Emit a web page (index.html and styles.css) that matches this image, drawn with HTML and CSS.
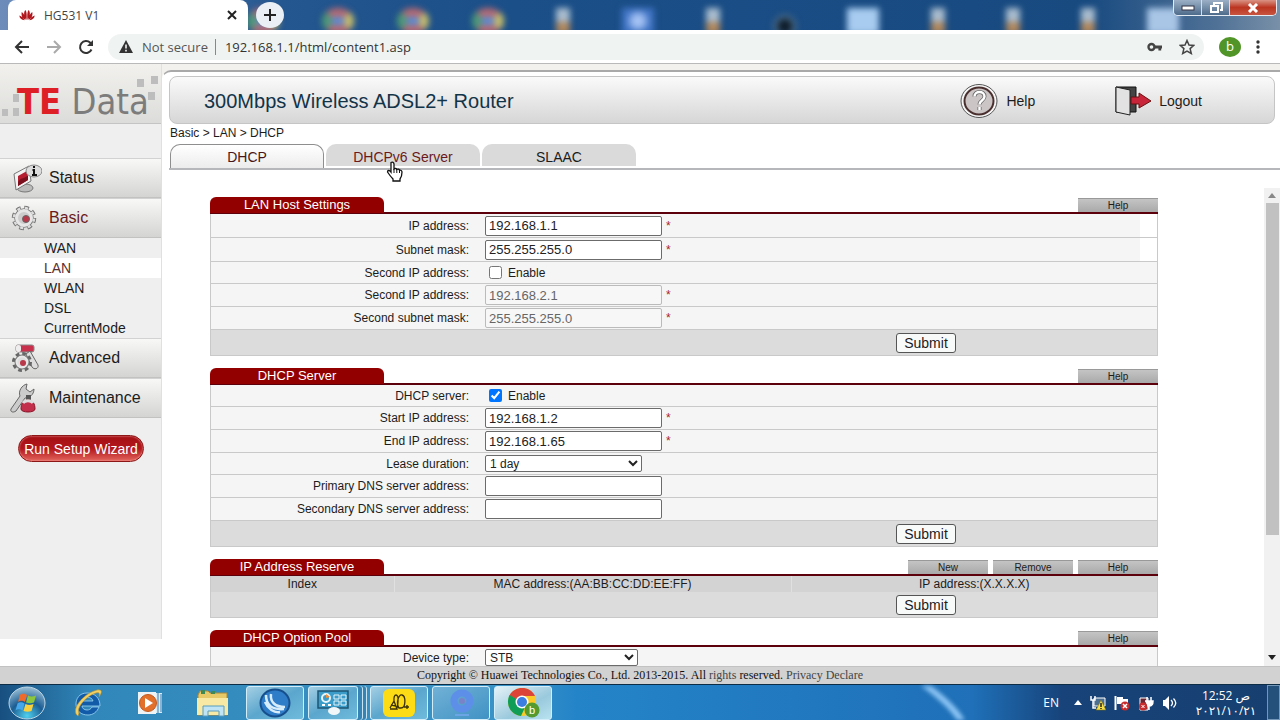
FILE: index.html
```html
<!DOCTYPE html>
<html lang="en">
<head>
    <meta charset="UTF-8">
    <meta name="viewport" content="width=device-width, initial-scale=1.0">
    <title>HG531 V1</title>
    <link rel="stylesheet" href="styles.css">
</head>
<body>
    <!-- Browser window -->
    <div class="tabstrip">
        <div class="desktop-icons">
            <i class="chrome"></i><i class="chrome"></i><i class="chrome"></i><i class="chrome"></i>
            <i class="cone"></i><i class="earth"></i><i class="cone"></i><i class="dark"></i><i class="file"></i>
            <i class="cone"></i><i class="cone"></i><i class="cone"></i><i class="sheet"></i>
        </div>
        <div class="tab">
            <svg width="16" height="12" viewBox="0 0 16 12" fill="#b0161c">
                <path d="M7.500 11C4.500 7 4.500 3 6.500 1c1.300 2 1.500 6 1 10zM8.500 11c3-4 3-8 1-10-1.300 2-1.500 6-1 10zM6.500 11C3 9 2 6 2.800 3c2.200 1.500 3.500 4.500 3.700 8zM9.500 11c3.500-2 4.500-5 3.700-8-2.200 1.500-3.500 4.500-3.700 8zM5.500 11.300C2.500 11 .6 9.300.3 6.500c2.200.6 4.200 2.500 5.200 4.800zM10.500 11.300c3-.3 4.900-2 5.200-4.800-2.200.6-4.200 2.500-5.200 4.800z"/>
            </svg>
            <span>HG531 V1</span>
            <button class="tab-close" aria-label="Close tab">
                <svg width="10" height="10" viewBox="0 0 10 10" stroke="#222" stroke-width="2"><path d="M1 1l8 8M9 1l-8 8"/></svg>
            </button>
        </div>
        <button class="new-tab" aria-label="New tab">
            <svg width="14" height="14" viewBox="0 0 14 14" stroke="#222" stroke-width="2"><path d="M7 1v12M1 7h12"/></svg>
        </button>
        <div class="window-controls">
            <button aria-label="Minimize"><svg width="14" height="8"><rect x="1" y="2" width="12" height="4" fill="#fff" stroke="#334"/></svg></button>
            <button aria-label="Restore"><svg width="14" height="12" fill="none" stroke="#fff" stroke-width="2"><path d="M5 3V1h8v7h-2"/><rect x="2" y="4" width="7" height="6"/></svg></button>
            <button class="close" aria-label="Close"><svg width="12" height="10" stroke="#fff" stroke-width="3"><path d="M2 1l8 8M10 1L2 9"/></svg></button>
        </div>
    </div>

    <div class="toolbar">
        <button aria-label="Back"><svg width="16" height="16" viewBox="0 0 16 16" fill="none" stroke="#333" stroke-width="2"><path d="M15 8H2M8 2L2 8l6 6"/></svg></button>
        <button aria-label="Forward"><svg width="16" height="16" viewBox="0 0 16 16" fill="none" stroke="#aaa" stroke-width="2"><path d="M1 8h13M8 2l6 6-6 6"/></svg></button>
        <button aria-label="Reload"><svg width="16" height="16" viewBox="0 0 16 16" fill="none" stroke="#333" stroke-width="2"><path d="M13.500 10.500A6 6 0 1 1 12.300 3.800L14 5.500"/><path d="M15 1v6H9z" fill="#333" stroke="none"/></svg></button>
        <div class="omnibox">
            <svg width="14" height="13" viewBox="0 0 14 13"><path d="M7 0l7 13H0z" fill="#333"/><path d="M7 4.500v4M7 9.800v1.600" stroke="#fff" stroke-width="1.500"/></svg>
            <span class="not-secure">Not secure</span>
            <span class="url">192.168.1.1/html/content1.asp</span>
            <svg width="16" height="10" viewBox="0 0 16 10"><circle cx="4.500" cy="5" r="3" fill="none" stroke="#444" stroke-width="2.400"/><path d="M8 5h7M12.800 5v3.500" stroke="#444" stroke-width="2.800"/></svg>
            <svg width="16" height="16" viewBox="0 0 16 16" fill="none" stroke="#444" stroke-width="1.500"><path d="M8 1.500l2 4.500 4.800.4-3.700 3.200 1.200 4.900L8 12l-4.300 2.500 1.200-4.900L1.200 6.400 6 6z"/></svg>
        </div>
        <span class="avatar">b</span>
        <button class="more" aria-label="Menu"><svg width="4" height="14" fill="#333"><circle cx="2" cy="2" r="1.700"/><circle cx="2" cy="7" r="1.700"/><circle cx="2" cy="12" r="1.700"/></svg></button>
    </div>

    <!-- Router page -->
    <div class="page">
        <aside class="sidebar">
            <div class="logo">
                <svg class="squares" viewBox="0 0 162 58">
                    <path fill="#bdbdbd" d="M137 15h7v8h-7zM151 12h7v8h-7zM148 28h7v8h-7zM13 30h6v8h-6zM2 45h6v7H2zM13 44h6v8h-6z"/>
                </svg>
                <b>TE</b> <span>Data</span>
            </div>
            <nav>
                <a class="menu" href="#">
                    <svg width="32" height="30" viewBox="0 0 32 30">
                        <ellipse cx="15" cy="25" rx="8" ry="4" fill="#bbb" stroke="#777"/>
                        <path d="M4 11L19 3l2 15L6 27z" fill="#f2f2f2" stroke="#777"/>
                        <path d="M8 13l9-5 1 9-10 6z" fill="#b51d30"/><path d="M8 19c4-6 6-2 10-7v5L8 23z" fill="#7b0f1e"/>
                        <ellipse cx="24" cy="8" rx="8" ry="6" fill="#ddd" stroke="#888"/><path d="M24 3v2M22.500 7H24v5M22 12h5" fill="none" stroke="#111" stroke-width="2"/>
                    </svg>
                    Status
                </a>
                <a class="menu open" href="#">
                    <svg width="32" height="30" viewBox="0 0 32 30">
                        <circle cx="14" cy="15" r="10" fill="none" stroke="#777" stroke-width="4.500" stroke-dasharray="4.400 3.454"/>
                        <circle cx="14" cy="15" r="7.500" fill="#d5d5d5" stroke="#777" stroke-width="4.500"/>
                        <circle cx="14" cy="15" r="10" fill="none" stroke="#ddd" stroke-width="2.500" stroke-dasharray="3 4.854" stroke-dashoffset="-.7"/>
                        <circle cx="14" cy="15" r="7.500" fill="#ccc" stroke="#e6e6e6" stroke-width="3"/>
                        <circle cx="16" cy="16" r="3.500" fill="#b9384a" stroke="#666"/>
                    </svg>
                    Basic
                </a>
                <ul>
                    <li><a href="#">WAN</a></li>
                    <li class="active"><a href="#">LAN</a></li>
                    <li><a href="#">WLAN</a></li>
                    <li><a href="#">DSL</a></li>
                    <li><a href="#">CurrentMode</a></li>
                </ul>
                <a class="menu" href="#">
                    <svg width="32" height="30" viewBox="0 0 32 30">
                        <rect x="6" y="2" width="18" height="7" rx="2" fill="#c9304c" stroke="#888"/><rect x="6" y="2" width="5" height="7" rx="2" fill="#eee"/>
                        <path d="M20 8l8 14c1 4-4 5-6 2L16 11z" fill="#ddd" stroke="#666"/>
                        <circle cx="12" cy="19" r="8" fill="none" stroke="#666" stroke-width="4" stroke-dasharray="3.500 2.783"/>
                        <circle cx="12" cy="19" r="6.500" fill="#ddd" stroke="#777" stroke-width="2"/><circle cx="12" cy="19" r="5.500" fill="none" stroke="#e8e8e8" stroke-width="2"/><circle cx="13" cy="20" r="3" fill="#b9384a"/>
                    </svg>
                    Advanced
                </a>
                <a class="menu" href="#">
                    <svg width="32" height="30" viewBox="0 0 32 30">
                        <path d="M1 26l9-13c-2-5 2-11 7-12l-1 5 4 3 4-3c0 6-5 9-9 9L6 28c-3 2-6 1-5-2z" fill="#ccc" stroke="#666"/>
                        <path d="M16 12h5v6h-5z" fill="#555"/><path d="M11 26c0-5 2-9 7-9s7 4 7 9c0 4-14 4-14 0z" fill="#c22f4a" stroke="#8a1528"/><path d="M13 20c2-3 8-3 10 0" stroke="#ddd" stroke-width="3" fill="none"/>
                    </svg>
                    Maintenance
                </a>
            </nav>
            <button class="wizard">Run Setup Wizard</button>
        </aside>

        <main>
            <div class="panel">
                <header>
                    <h1>300Mbps Wireless ADSL2+ Router</h1>
                    <a class="help" href="#">
                        <svg width="38" height="36" viewBox="0 0 38 36">
                            <ellipse cx="19" cy="18" rx="18" ry="16.500" fill="#f5f5f5" stroke="#555"/>
                            <ellipse cx="19" cy="18" rx="14.500" ry="13.500" fill="#ccc5c5" stroke="#4a2f2f" stroke-width="2"/>
                            <path d="M14.500 13.500c0-6 10-6 10 0 0 4-5 4-5 8M19.500 24v3" fill="none" stroke="#666" stroke-width="4"/>
                            <path d="M14.500 13.500c0-6 10-6 10 0 0 4-5 4-5 8M19.500 24v3" fill="none" stroke="#fff" stroke-width="2.500"/>
                        </svg>
                        Help
                    </a>
                    <a class="logout" href="#">
                        <svg width="36" height="30" viewBox="0 0 36 30">
                            <path d="M1 1h20v25H1z" fill="#444" stroke="#111"/>
                            <path d="M1 1l14 3v25L1 26z" fill="#e2e2e2" stroke="#222"/>
                            <path d="M16 11h8V7l12 8-12 7v-4h-8z" fill="#c8243a" stroke="#611"/>
                        </svg>
                        Logout
                    </a>
                </header>
                <div class="breadcrumb">Basic &gt; LAN &gt; DHCP</div>
                <div class="tabs">
                    <a class="current" href="#">DHCP</a>
                    <a class="hover" href="#">DHCPv6 Server
                        <svg class="cursor" width="18" height="21" viewBox="0 0 18 21"><path d="M5 1.500c1.500-1 3 0 3 1.500v5c1-1 2.500-.5 2.800.5 1-.8 2.400-.2 2.700.8 1.300-.5 2.500.3 2.500 1.700 0 3-.5 5-2 7v2H7v-2c-2-2-3.500-4-5.500-7 0-2 2-2 3.500 0z" fill="#fff" stroke="#111" stroke-width="1.300"/><path d="M8 8v4M10.800 8.500V12M13.500 9.500V12" stroke="#111"/></svg>
                    </a>
                    <a href="#">SLAAC</a>
                </div>
                <div class="scroll-area">
                    <div class="content">
                        <section>
                            <div class="section-head"><h2>LAN Host Settings</h2><button>Help</button></div>
                            <form>
                                <div class="row short"><label for="ip">IP address:</label><div><input type="text" id="ip" value="192.168.1.1"><em>*</em></div></div>
                                <div class="row short"><label for="mask">Subnet mask:</label><div><input type="text" id="mask" value="255.255.255.0"><em>*</em></div></div>
                                <div class="row check"><span>Second IP address:</span><div><input type="checkbox" id="second"><label for="second">Enable</label></div></div>
                                <div class="row"><label for="ip2">Second IP address:</label><div><input type="text" id="ip2" value="192.168.2.1" disabled><em>*</em></div></div>
                                <div class="row"><label for="mask2">Second subnet mask:</label><div><input type="text" id="mask2" value="255.255.255.0" disabled><em>*</em></div></div>
                                <div class="submit"><button type="button">Submit</button></div>
                            </form>
                        </section>

                        <section>
                            <div class="section-head"><h2>DHCP Server</h2><button>Help</button></div>
                            <form>
                                <div class="row check"><span>DHCP server:</span><div><input type="checkbox" id="dhcp" checked><label for="dhcp">Enable</label></div></div>
                                <div class="row"><label for="start">Start IP address:</label><div><input type="text" id="start" value="192.168.1.2"><em>*</em></div></div>
                                <div class="row"><label for="end">End IP address:</label><div><input type="text" id="end" value="192.168.1.65"><em>*</em></div></div>
                                <div class="row check"><label for="lease">Lease duration:</label><div><select id="lease"><option>1 day</option></select></div></div>
                                <div class="row"><label for="dns1">Primary DNS server address:</label><div><input type="text" id="dns1"></div></div>
                                <div class="row"><label for="dns2">Secondary DNS server address:</label><div><input type="text" id="dns2"></div></div>
                                <div class="submit"><button type="button">Submit</button></div>
                            </form>
                        </section>

                        <section>
                            <div class="section-head"><h2>IP Address Reserve</h2><button>New</button><button>Remove</button><button>Help</button></div>
                            <form>
                                <table>
                                    <tr><th class="col-index">Index</th><th class="col-mac">MAC address:(AA:BB:CC:DD:EE:FF)</th><th>IP address:(X.X.X.X)</th></tr>
                                </table>
                                <div class="submit"><button type="button">Submit</button></div>
                            </form>
                        </section>

                        <section>
                            <div class="section-head"><h2>DHCP Option Pool</h2><button>Help</button></div>
                            <form>
                                <div class="row check"><label for="device">Device type:</label><div><select id="device"><option>STB</option></select></div></div>
                            </form>
                        </section>
                    </div>
                    <div class="scrollbar">
                        <svg width="8" height="5"><path d="M0 5l4-5 4 5z" fill="#888"/></svg>
                        <div class="thumb"></div>
                        <svg width="8" height="5"><path d="M0 0l4 5 4-5z" fill="#222"/></svg>
                    </div>
                </div>
            </div>
        </main>
    </div>

    <footer>Copyright © Huawei Technologies Co., Ltd. 2013-2015. All <span>rights</span> reserved. <a href="#">Privacy Declare</a></footer>

    <!-- Windows taskbar -->
    <div class="taskbar">
        <button class="launch" aria-label="Start">
            <svg width="38" height="34" viewBox="0 0 38 34">
                <defs><radialGradient id="orb" cx=".5" cy=".9" r=".9"><stop offset="0" stop-color="#4fd0ee"/><stop offset=".5" stop-color="#1b5d93"/><stop offset="1" stop-color="#9cc0d6"/></radialGradient></defs>
                <ellipse cx="19" cy="17" rx="18" ry="16" fill="url(#orb)" stroke="#bcd6e6"/>
                <path d="M12 9c3-2 5-1 7 0l-2 7c-2-1-4-2-7 0z" fill="#f06a2c"/><path d="M20 9.500c3 1.500 5 1 8 0l-2 7c-3 1-5 1-8 0z" fill="#8cc63f"/>
                <path d="M9.500 17.500c3-2 5-1 7 0l-2 7c-2-1-4-2-7 0z" fill="#46a8ea"/><path d="M17.500 18c3 1.500 5 1 8 0l-2 7c-3 1-5 1-8 0z" fill="#fbd03d"/>
            </svg>
        </button>
        <button class="launch" aria-label="Internet Explorer">
            <svg width="34" height="30" viewBox="0 0 34 30">
                <path d="M15 5C7 5 4 11 4 16c0 7 5 11 12 11 5 0 9-3 11-8h-7c-1 2-3 3-5 3-3 0-5-2-5-4h18C28 10 23 5 15 5zM10 13c1-5 10-5 11 0z" fill="#125ba8" stroke="#9ed8f5" stroke-width=".8"/>
                <path d="M6 28C-2 23 10 6 25 2c6-1 5 3 2 7 1-4 0-5-3-4C14 8 4 20 7 25z" fill="#f2d064" stroke="#b98e28" stroke-width=".6"/>
            </svg>
        </button>
        <button class="launch" aria-label="Media Player">
            <svg width="28" height="24" viewBox="0 0 28 24">
                <path d="M7 2h18v20H7z" fill="#d8eefa"/><path d="M21 2v20M24 3v18" stroke="#3c7ba8"/><path d="M1 1h18v22H1z" fill="#eef3f5"/>
                <circle cx="11" cy="12" r="8.500" fill="#e2702b" stroke="#c05a20"/><path d="M8 7l8 5-8 5z" fill="#fff"/>
            </svg>
        </button>
        <button class="launch" aria-label="Explorer">
            <svg width="34" height="28" viewBox="0 0 34 28">
                <path d="M2 6l2-4h8l2 2h17v22H2z" fill="#e8c968" stroke="#a88a3a"/><path d="M5 1h4v4H5zM15 2h4v3h-4z" fill="#3c8a58"/>
                <path d="M1 9h31v17H1z" fill="#f8e9a5"/><path d="M7 27V17h21v10h-5v-5H12v5z" fill="#bfe4f5" stroke="#5a9dc0"/>
            </svg>
        </button>
        <button class="app" aria-label="Browser">
            <svg width="34" height="30" viewBox="0 0 34 30"><ellipse cx="17" cy="15" rx="14.500" ry="13.500" fill="#2f7cc8" stroke="#174f8d" stroke-width="2"/><path d="M8 7c0 10 6 15 18 14M13 6c-1 8 4 13 14 13M7 14c3 7 9 11 15 10" fill="none" stroke="#d6ecfb" stroke-width="2.500"/></svg>
        </button>
        <button class="app stacked" aria-label="Control Panel">
            <svg width="32" height="28" viewBox="0 0 32 28"><path d="M1 2h30v17H1z" fill="#3b9cc9" stroke="#1e5574" stroke-width="1.500"/><circle cx="9" cy="9" r="4" fill="none" stroke="#e7f5fa" stroke-width="2"/><path d="M9 9V5l4 3z" fill="#f09038"/><path d="M17 6h5v4h-5zM24 6h5v4h-5zM17 12h5v4h-5zM24 12h5v4h-5z" fill="none" stroke="#e7f5fa"/><path d="M5 16h3M11 16h3" stroke="#fff" stroke-width="2"/><ellipse cx="17" cy="22" rx="6" ry="4" fill="#f1f6f8"/></svg>
        </button>
        <button class="app" aria-label="Recorder">
            <svg width="32" height="28" viewBox="0 0 32 28"><rect width="32" height="28" rx="6" fill="#fddc16"/><path d="M7 19l4-7 3 8H7M11 12c-1-8 5-8 4 0 0 4-1 7-1 7M16 19c-3-4-1-14 3-13s4 13-1 13zM21 18h5M24 20v-4M8 16l5 1" fill="none" stroke="#3b3108" stroke-width="1.300"/></svg>
        </button>
        <button class="app dim" aria-label="Camera">
            <svg width="28" height="28" viewBox="0 0 28 28"><circle cx="15" cy="12" r="8" fill="none" stroke="#5e8fe8" stroke-width="7"/><circle cx="15" cy="12" r="3" fill="#7b83c8"/><path d="M8 26h14" stroke="#6ca5e6" stroke-width="2"/></svg>
        </button>
        <button class="app front" aria-label="Chrome">
            <svg width="34" height="30" viewBox="0 0 34 30"><circle cx="16" cy="14" r="14" fill="#fbc928"/><path d="M16 14L3.500 7.500C8-2 24-3 29 8H16z" fill="#db4437"/><path d="M16 14L3.500 7C-1 17 5 27 15 28l5-11z" fill="#109d58"/><circle cx="16" cy="14" r="6.500" fill="#fff"/><circle cx="16" cy="14" r="5" fill="#3b7de0"/><circle cx="26" cy="22" r="7.500" fill="#559a2f"/><text x="26" y="26" text-anchor="middle" font-size="11" fill="#fff">b</text></svg>
        </button>
        <svg class="streak" width="70" height="34" viewBox="0 0 70 34"><path d="M8 0h10c14 10 26 21 34 34h-8C36 22 22 10 8 0z" fill="#8cc4f4"/></svg>
        <div class="tray">
            <span class="lang">EN</span>
            <svg width="8" height="5"><path d="M0 5l4-5 4 5z" fill="#fff"/></svg>
            <svg width="16" height="16" viewBox="0 0 16 16"><path d="M4 3h11v8H4z" fill="#4b6f92" stroke="#fff"/><path d="M1 1v4h4V1M3 5v8h3" fill="none" stroke="#fff" stroke-width="1.500"/><path d="M11 5l5 10H6z" fill="#f8e04a" stroke="#776a10" stroke-width=".6"/><path d="M11 8v4M11 13v1" stroke="#222" stroke-width="1.500"/></svg>
            <svg width="16" height="16" viewBox="0 0 16 16"><path d="M1.500 1v14" stroke="#fff" stroke-width="2"/><path d="M3 2h6v2h5v7H9L8 9H3z" fill="#fff"/><circle cx="11" cy="11" r="4.500" fill="#c92c2c"/><path d="M9 9l4 4M13 9l-4 4" stroke="#fff" stroke-width="1.500"/></svg>
            <svg width="16" height="16" viewBox="0 0 16 16"><path d="M2 3h8v12H2z" fill="#6a2633" stroke="#fff"/><path d="M9 2v4M13 2v4M7 6h8c0 4-1 5-4 5v4" fill="#fff" stroke="#fff" stroke-width="1.500"/><circle cx="5" cy="11.500" r="4" fill="#c92c2c"/><path d="M3.500 10l3 3M6.500 10l-3 3" stroke="#fff"/></svg>
            <svg width="16" height="14" viewBox="0 0 16 14"><path d="M1 4h2l4-4v14L3 10H1z" fill="#fff"/><path d="M9 4c2 2 2 4 0 6M11.500 2.500c3 3 3 6 0 9" fill="none" stroke="#fff" stroke-width="1.300"/></svg>
            <div class="clock"><span>12:52 ص</span><span>٢٠٢١/١٠/٢١</span></div>
        </div>
        <button class="show-desktop" aria-label="Show desktop"></button>
    </div>
</body>
</html>
```
FILE: styles.css
```css
:root {
    --red: #930000;
    --dark-red: #5c000b;
    --line: #c9c9c9;
    --row: #f5f5f5;
    --ui-font: "Open Sans", "Noto Sans", sans-serif;
}
* { box-sizing: border-box; }
body { margin: 0; height: 100vh; display: flex; flex-direction: column; overflow: hidden; background: #fff; font-family: "Liberation Sans", Arial, sans-serif; font-size: 12px; color: #1c1c1c; }
a { color: inherit; text-decoration: none; }
button { font-family: inherit; color: inherit; padding: 0; cursor: pointer; }
svg { flex: none; display: block; }

/* browser tab strip */
.tabstrip { position: relative; flex: none; height: 30px; display: flex; padding-left: 8px; background: linear-gradient(90deg, #6d8cba, #24568f 22%, #1b4f88 40%, #184a80 85%, #4f7196 95%, #7990a8); overflow: hidden; }
.desktop-icons { position: absolute; top: 8px; left: 247px; display: flex; gap: 43px; filter: blur(3px); }
.desktop-icons i { width: 32px; height: 26px; }
.desktop-icons .chrome { border: 9px solid #b76a72; border-left-color: #4e9a74; border-right-color: #c9bf68; border-radius: 50%; background: #4d8fe0; }
.desktop-icons .cone { border: solid transparent; border-width: 0 9px; background: linear-gradient(#a9bccd 14px, #b0875c 14px) padding-box; }
.desktop-icons .earth { background: radial-gradient(circle, #a7c4f5 5px, #3f73c4 12px); }
.desktop-icons .dark { background: radial-gradient(circle at 40% 70%, #0d1c2a 6px, #54728c 9px, transparent 13px); }
.desktop-icons .file { background: #a8ccf0; }
.desktop-icons .sheet { background: #a9c6e6; }
.tab { position: relative; width: 240px; display: flex; align-items: center; padding: 0 11px; background: #fff; border-radius: 8px 8px 0 0; font-family: var(--ui-font); font-size: 12px; color: #444; }
.tab span { flex: 1; padding-left: 9px; }
.tab-close { width: 10px; height: 10px; border: 0; background: none; }
.new-tab { position: relative; width: 28px; height: 26px; margin: 2px 0 0 8px; display: grid; place-items: center; border: 0; border-radius: 50%; background: #e9eff4; }
.window-controls { position: relative; margin: 0 3px 0 auto; height: 16px; display: flex; border: 1px solid #e5ebf2; border-top: 0; border-radius: 0 0 5px 5px; overflow: hidden; }
.window-controls button { width: 28px; display: grid; place-items: center; border: 0; border-right: 1px solid #d5dde6; background: linear-gradient(#9bb0c6, #4e6b8b); }
.window-controls .close { width: 46px; border-right: 0; background: linear-gradient(#d99384, #bb3520 50%, #c85540); }

/* address bar */
.toolbar { flex: none; height: 34px; display: flex; align-items: center; gap: 16px; padding: 0 20px 0 14px; border-bottom: 1px solid #b9b9b9; font-family: var(--ui-font); font-size: 13px; }
.toolbar button { border: 0; background: none; }
.omnibox { flex: 1; height: 26px; display: flex; align-items: center; gap: 16px; margin-left: -2px; padding: 0 9px 0 11px; border-radius: 13px; background: #eff3f2; }
.not-secure { margin-left: -7px; padding-right: 7px; border-right: 1px solid #888; line-height: 16px; color: #555; }
.url { flex: 1; margin-left: -7px; color: #333; }
.avatar { width: 22px; height: 20px; margin-left: -4px; border-radius: 50%; background: #519528; color: #fff; text-align: center; line-height: 19px; }
.toolbar .avatar { margin-left: -1px; margin-right: -1px; }

/* router page */
.page { flex: 1; min-height: 0; display: flex; background: #fff; }
.sidebar { flex: none; width: 162px; margin-bottom: 27px; background: #efefef; border-right: 1px solid #e0e0e0; }
.logo { position: relative; height: 60px; margin-bottom: 34px; padding: 13px 0 0 17px; border-bottom: 1px solid #c4c4c4; background: linear-gradient(#f2f1ee, #dcdcda); font: 36px/50px "Liberation Sans Narrow", "DejaVu Sans Condensed", sans-serif; white-space: nowrap; }
.logo .squares { position: absolute; top: 0; left: 0; width: 162px; height: 58px; }
.logo b { position: relative; color: #df1f26; }
.logo span { position: relative; color: #7c7c7c; }
.menu { display: flex; align-items: center; height: 40px; padding-left: 10px; gap: 7px; border-top: 1px solid #d2d2d2; border-bottom: 1px solid #c2c2c0; background: linear-gradient(#f8f8f7, #d4d4d2); font-size: 16px; }
.menu.open { color: #6a1a1a; }
.sidebar ul { margin: 0; padding: 0; list-style: none; font-size: 14px; line-height: 20px; }
.sidebar li { padding-left: 44px; }
.sidebar li.active { background: #fff; color: #5a3030; }
.wizard { display: block; width: 126px; height: 27px; margin: 17px 0 0 18px; border: 1px solid #8d1717; border-radius: 14px; background: linear-gradient(#a31015, #b3161b 50%, #e2645c); box-shadow: inset 0 0 2px #ffb5b5; color: #fff; font-size: 14px; white-space: nowrap; }

main { flex: 1; min-width: 0; display: flex; padding-top: 6px; background: linear-gradient(#f2f1ed 14px, #fff 14px); }
.panel { flex: 1; min-width: 0; display: flex; flex-direction: column; padding: 4px 0 0 6px; border-top: 2px solid #a9a9a9; border-left: 1px solid transparent; border-radius: 9px 0 0 0; background: #fff; }
header { flex: none; height: 48px; display: flex; align-items: center; margin-right: 5px; padding: 2px 72px 0 34px; border: 1px solid #c5c5c5; border-radius: 8px; background: linear-gradient(#fafafa, #d6d6d6); font-size: 14px; }
h1 { flex: 1; margin: 0; font-size: 20px; font-weight: normal; color: #123449; }
header a { display: flex; align-items: center; gap: 8px; }
header .help { margin-right: 80px; }
.breadcrumb { flex: none; height: 20px; line-height: 18px; padding-left: 1px; }
.tabs { flex: none; display: flex; gap: 2px; height: 26px; padding-left: 1px; border-bottom: 2px solid #b5b7ba; }
.tabs a { position: relative; width: 154px; height: 22px; border-radius: 10px 10px 0 0; background: #dadada; font-size: 14px; line-height: 26px; text-align: center; }
.tabs .current { height: 24px; border: 1px solid #8e8e8e; border-bottom: 0; background: linear-gradient(#fff, #ececec); line-height: 24px; color: #4a1717; }
.tabs .hover { color: #6a1a1a; }
.cursor { position: absolute; top: 17px; left: 60px; z-index: 1; }

.scroll-area { flex: 1; min-height: 0; display: flex; overflow: hidden; }
.content { flex: 1; min-width: 0; padding: 27px 106px 0 41px; overflow: hidden; }
section { margin-bottom: 12px; }
.section-head { display: flex; gap: 5px; height: 17px; padding-top: 1px; border-bottom: 2px solid var(--dark-red); }
h2 { width: 174px; height: 16px; margin: -1px auto 0 0; border-radius: 6px 6px 0 0; background: var(--red); color: #fff; font-size: 13px; font-weight: normal; line-height: 16px; text-align: center; }
.section-head button { width: 80px; border: 0; border-top: 1px solid #999; background: linear-gradient(#c4c4c4, #a9a9a9); font-size: 10px; line-height: 13px; }
form { border: 1px solid var(--line); border-top: 0; }
.row { display: flex; align-items: center; height: 23px; border-bottom: 1px solid var(--line); background: var(--row); }
.row.short { height: 24px; background: linear-gradient(270deg, #fff 17px, var(--row) 17px); }
.row.check { height: 22px; }
.row > :first-child { width: 258px; text-align: right; }
.row > div { display: flex; align-items: center; margin-left: 16px; }
.row em { padding-left: 4px; font-style: normal; color: #a22; }
.row input[type="text"] { width: 177px; height: 20px; padding: 0 3px; border: 1px solid #6b6b6b; border-radius: 2px; background: #fff; font: 13px "Liberation Sans", Arial, sans-serif; color: #222; }
.row input[type="text"]:disabled { border-color: #bbb; background: #f7f7f7; color: #666; }
.row input[type="checkbox"] { width: 13px; height: 13px; margin: 0 6px 0 4px; }
.row select { width: 157px; height: 17px; padding: 0; border: 1px solid #6b6b6b; border-radius: 2px; background: #fff; font: 12px "Liberation Sans", Arial, sans-serif; color: #222; }
#device { width: 153px; }
.submit { display: flex; justify-content: flex-end; align-items: center; height: 25px; padding-right: 201px; background: #dcdcdc; }
.submit button { width: 60px; height: 20px; border: 1px solid #555; border-radius: 3px; background: #f8fafa; font-size: 14px; line-height: 18px; }
table { width: 100%; border-collapse: collapse; table-layout: fixed; background: #d3d3d3; }
th { height: 16px; padding: 0; font-weight: normal; line-height: 16px; white-space: nowrap; }
th + th { border-left: 1px solid #e0e0e0; }
.col-index { width: 183px; }
.col-mac { width: 397px; }
.scrollbar { flex: none; width: 16px; margin-top: 18px; display: flex; flex-direction: column; align-items: center; padding: 5px 0 6px; background: #f1f1f1; }
.thumb { width: 13px; height: 71%; margin: 5px 0 auto; background: #c1c1c1; }

footer { flex: none; height: 18px; border-top: 1px solid #c2c2c2; background: #d2d2d2; font: 12px/17px "Liberation Serif", "Times New Roman", serif; text-align: center; color: #111; }
footer span, footer a { color: #444; }

/* taskbar */
.taskbar { flex: none; height: 36px; display: flex; align-items: center; border-top: 1px solid #0d2c45; background: linear-gradient(90deg, #174f80, #3187ba 7%, #3a93c6 40%, #2484c8 45%, #1f70b8 76%, #17437a 83%, #174070); }
.launch { width: 62px; height: 34px; display: grid; place-items: center; border: 0; background: none; }
.launch:first-child { width: 58px; padding-right: 4px; }
.app { position: relative; width: 58px; height: 34px; margin-left: 4px; display: grid; place-items: center; border: 1px solid #d3eefa; border-radius: 3px; background: linear-gradient(150deg, #a4cfe4, #5ba6cd 50%, #6fbbdc); }
.launch + .app { margin-left: 2px; }
.stacked { width: 50px; margin-right: 8px; box-shadow: 4px 0 0 #3584b4, 5px 0 0 #c8e4f0, 8px 0 0 #3584b4, 9px 0 0 #c8e4f0; }
.dim { background: linear-gradient(150deg, #71b1d6, #4092c4); }
.front { background: linear-gradient(150deg, #e5f2f7, #9ac9dd 60%, #b8e2ef); }
.streak { margin-left: auto; margin-right: 60px; filter: blur(2px); }
.tray { display: flex; align-items: center; justify-content: flex-end; gap: 8px; color: #fff; font: 12px/18px "Open Sans", "DejaVu Sans", sans-serif; }
.lang { margin-right: 7px; }
.clock { width: 80px; display: flex; flex-direction: column; align-items: center; line-height: 15px; }
.show-desktop { width: 13px; height: 35px; margin-left: 1px; border: 1px solid #7397b8; background: #24507c; }
```
